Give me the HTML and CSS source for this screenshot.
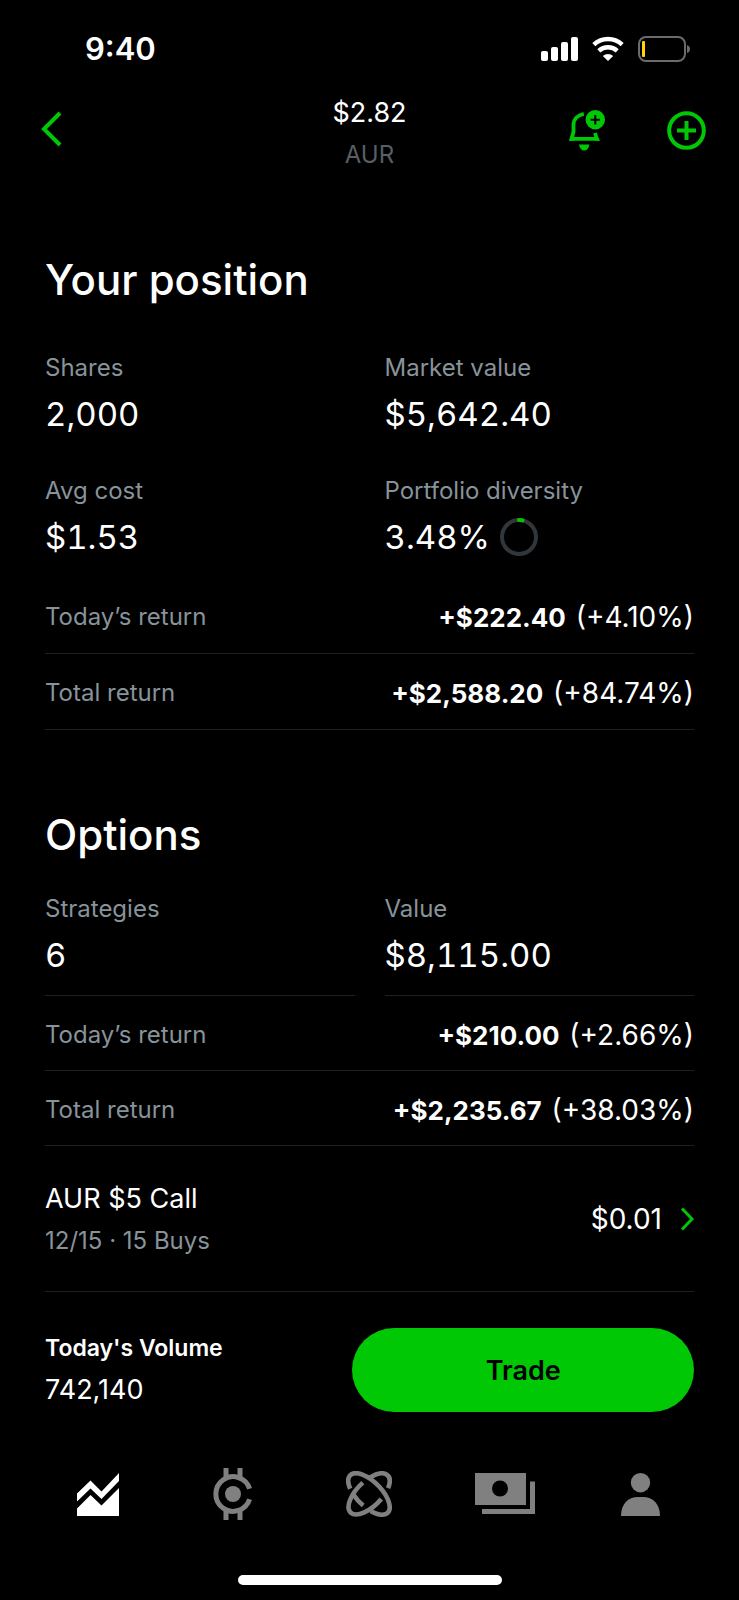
FILE: index.html
```html
<!DOCTYPE html>
<html lang="en">
<head>
    <meta charset="UTF-8">
    <meta name="viewport" content="width=device-width, initial-scale=1.0">
    <title>AUR</title>
    <link rel="stylesheet" href="styles.css">
</head>
<body>
    <div class="status-bar">
        <span class="time">9:40</span>
        <div class="status-icons">
            <svg width="37" height="26" viewBox="0 0 37 26" fill="#fff">
                <rect x="0" y="15" width="7" height="10" rx="2"/>
                <rect x="10" y="11" width="7" height="14" rx="2"/>
                <rect x="20" y="6" width="7" height="19" rx="2"/>
                <rect x="30" y="1" width="7" height="24" rx="2"/>
            </svg>
            <svg width="32" height="26" viewBox="0 0 32 26" fill="none" stroke="#fff" stroke-width="4.4">
                <path d="M1.8 8.6a21 21 0 0 1 28.4 0"/>
                <path d="M6.8 14.8a13.5 13.5 0 0 1 18.4 0"/>
                <path d="M16 25l-5.2-5a7.8 7.8 0 0 1 10.4 0z" fill="#fff" stroke="none"/>
            </svg>
            <svg width="52" height="26" viewBox="0 0 52 26">
                <rect x="1" y="1" width="46" height="24" rx="7" fill="none" stroke="#6b6b6b" stroke-width="2"/>
                <rect x="4" y="5" width="3" height="16" rx="1" fill="#ffd60a"/>
                <path d="M49 9q3 1 3 4t-3 4z" fill="#6b6b6b"/>
            </svg>
        </div>
    </div>

    <header class="navbar">
        <a href="#" class="back" aria-label="Back">
            <svg width="22" height="36" viewBox="0 0 22 36" fill="none" stroke="#00c805" stroke-width="4"><path d="M19 2L3 18l16 16"/></svg>
        </a>
        <div class="quote">
            <div class="price">$2.82</div>
            <div class="symbol">AUR</div>
        </div>
        <div class="navbar-right">
            <button type="button" aria-label="Add alert">
                <svg width="37" height="41" viewBox="0 0 37 41" fill="#00c805">
                    <path d="M14.8 3.8C8.5 5 4.5 9.5 4.5 15v6.5L2.8 28.8h25L26 23" fill="none" stroke="#00c805" stroke-width="3.8"/>
                    <path d="M2.3 24L0 30.8h5zM28.5 26l2.5 4.8h-5z"/>
                    <path d="M10 34.5h10.4q-1 6-5.2 6t-5.2-6z"/>
                    <circle cx="26.3" cy="9.7" r="9.7"/>
                    <path d="M26.3 5v9.4M21.6 9.7H31" stroke="#000" stroke-width="2"/>
                </svg>
            </button>
            <button type="button" aria-label="Add to list">
                <svg width="39" height="39" viewBox="0 0 39 39" fill="none" stroke="#00c805" stroke-width="4">
                    <circle cx="19.5" cy="19.5" r="17.3"/>
                    <path d="M19.5 10v19M10 19.5h19"/>
                </svg>
            </button>
        </div>
    </header>

    <main>
        <section class="position">
            <h2>Your position</h2>
            <div class="stats">
                <div class="stat">
                    <div class="label">Shares</div>
                    <div class="value">2,000</div>
                </div>
                <div class="stat">
                    <div class="label">Market value</div>
                    <div class="value">$5,642.40</div>
                </div>
                <div class="stat">
                    <div class="label">Avg cost</div>
                    <div class="value">$1.53</div>
                </div>
                <div class="stat">
                    <div class="label">Portfolio diversity</div>
                    <div class="value">3.48%
                        <svg width="38" height="38" viewBox="0 0 38 38" fill="none" stroke-width="4">
                            <circle cx="19" cy="19" r="17" stroke="#30363a"/>
                            <path d="M19 2a17 17 0 0 1 3.5 .4" stroke="#00c805" stroke-linecap="round"/>
                        </svg>
                    </div>
                </div>
            </div>
            <div class="row">
                <span class="label">Today’s return</span>
                <span class="amount"><b>+$222.40</b> (+4.10%)</span>
            </div>
            <div class="row">
                <span class="label">Total return</span>
                <span class="amount"><b>+$2,588.20</b> (+84.74%)</span>
            </div>
        </section>

        <section class="options">
            <h2>Options</h2>
            <div class="stats">
                <div class="stat">
                    <div class="label">Strategies</div>
                    <div class="value">6</div>
                </div>
                <div class="stat">
                    <div class="label">Value</div>
                    <div class="value">$8,115.00</div>
                </div>
            </div>
            <div class="row">
                <span class="label">Today’s return</span>
                <span class="amount"><b>+$210.00</b> (+2.66%)</span>
            </div>
            <div class="row">
                <span class="label">Total return</span>
                <span class="amount"><b>+$2,235.67</b> (+38.03%)</span>
            </div>
            <a href="#" class="contract">
                <div>
                    <div class="contract-name">AUR $5 Call</div>
                    <div class="label">12/15 · 15 Buys</div>
                </div>
                <div class="contract-price">
                    $0.01
                    <svg width="14" height="24" viewBox="0 0 14 24" fill="none" stroke="#00c805" stroke-width="3"><path d="M2 1.5L12 12 2 22.5"/></svg>
                </div>
            </a>
        </section>
    </main>

    <div class="trade-bar">
        <div class="volume">
            <div class="volume-title">Today's Volume</div>
            <div class="volume-number">742,140</div>
        </div>
        <button type="button" class="trade-button">Trade</button>
    </div>

    <nav class="tabs">
        <a href="#" aria-label="Investing">
            <svg width="42" height="43" viewBox="0 0 42 43" fill="#fff">
                <path d="M0 20.5L13.5 7.5 24.5 18.500 42 0v8L24.5 26 13.5 15.5 0 28.5z"/>
                <path d="M0 43V35.5L13.5 22 24.5 32.500 42 15v28z"/>
            </svg>
        </a>
        <a href="#" aria-label="Crypto">
            <svg width="40" height="52" viewBox="0 0 40 52" fill="none" stroke="#808080" stroke-width="5">
                <path d="M36.6 20.7A17.3 17.3 0 1 0 36.6 31.3"/>
                <path d="M13 0v10M27 0v10M13 42v10M27 42v10"/>
                <circle cx="20" cy="26" r="8" fill="#808080" stroke="none"/>
            </svg>
        </a>
        <a href="#" aria-label="Discover">
            <svg width="46" height="46" viewBox="0 0 46 46" fill="none" stroke="#808080" stroke-width="4.6">
                <g transform="rotate(45 23 23)">
                    <path d="M6 32.6A26.5 12.5 0 1 1 36.2 33.8"/>
                    <path d="M27.1 35.3A26.5 12.5 0 0 1 12.2 34.4"/>
                </g>
                <g transform="rotate(-45 23 23)">
                    <path d="M35.4 12A26.5 12.5 0 0 1 40.7 32.3"/>
                    <path d="M28.1 35.3A26.5 12.5 0 1 1 26.7 10.6"/>
                </g>
            </svg>
        </a>
        <a href="#" aria-label="Cash">
            <svg width="60" height="42" viewBox="0 0 60 42" fill="#808080">
                <path d="M0 0h51v32H0z"/>
                <circle cx="25" cy="15.5" r="8" fill="#000"/>
                <path d="M55 8.5h5V41H7v-5h48z"/>
            </svg>
        </a>
        <a href="#" aria-label="Account">
            <svg width="39" height="43" viewBox="0 0 39 43" fill="#808080">
                <circle cx="19.5" cy="9.7" r="9.7"/>
                <path d="M0 43C0 31 7 24 17 24h5c10 0 17 7 17 19z"/>
            </svg>
        </a>
    </nav>
    <div class="home-indicator"></div>
</body>
</html>
```

FILE: styles.css
```css
body {
    font-family: Inter, 'Liberation Sans', sans-serif;
    margin: 0;
    padding: 0;
    background-color: #000;
    color: #fff;
}
svg {
    display: block;
    flex-shrink: 0;
}
a {
    color: inherit;
    text-decoration: none;
}
button {
    font-family: inherit;
    border: none;
    padding: 0;
    background: none;
    cursor: pointer;
}
.status-bar {
    display: flex;
    justify-content: space-between;
    align-items: center;
    padding: 28px 49px 0 85px;
}
.time {
    font-size: 31px;
    line-height: 42px;
    font-weight: 600;
}
.status-icons {
    display: flex;
    gap: 14px;
}
.navbar {
    display: grid;
    grid-template-columns: 1fr auto 1fr;
    align-items: center;
    padding: 25px 33px 0;
}
.back {
    justify-self: start;
    padding: 0 8px 8px;
}
.quote {
    text-align: center;
}
.price {
    font-size: 27px;
    line-height: 36px;
}
.symbol {
    font-size: 24px;
    line-height: 32px;
    margin-top: 8px;
    color: #565f63;
}
.navbar-right {
    display: flex;
    justify-content: flex-end;
    align-items: center;
    gap: 61px;
    padding-bottom: 6px;
}
main {
    padding: 0 45px;
}
h2 {
    font-size: 42px;
    line-height: 56px;
    font-weight: 500;
    margin: 0;
}
.position {
    padding-top: 81px;
}
.options {
    padding-top: 77px;
}
.stats {
    display: grid;
    grid-template-columns: 1fr 1fr;
    gap: 41px 30px;
}
.position .stats {
    margin: 44px 0 21px;
}
.options .stats {
    margin-top: 30px;
}
.options .stat {
    padding-bottom: 20px;
    border-bottom: 1px solid #1e2124;
}
.label {
    font-size: 24px;
    line-height: 32px;
    color: #87939a;
}
.value {
    display: flex;
    align-items: center;
    gap: 10px;
    margin-top: 10px;
    font-size: 33px;
    line-height: 40px;
    font-variant-numeric: tabular-nums;
}
.row {
    display: flex;
    justify-content: space-between;
    align-items: center;
    padding: 21px 0 18px;
    border-bottom: 1px solid #1e2124;
}
.options .row {
    padding-bottom: 17px;
}
.amount {
    font-size: 28px;
    line-height: 36px;
}
.amount b {
    font-size: 26px;
    line-height: 26px;
    font-weight: 700;
    margin-right: 2px;
}
.contract {
    display: flex;
    justify-content: space-between;
    align-items: center;
    padding: 35px 0 34px;
    border-bottom: 1px solid #1e2124;
}
.contract-name {
    font-size: 27px;
    line-height: 36px;
    margin-bottom: 8px;
}
.contract-price {
    display: flex;
    align-items: center;
    gap: 18px;
    font-size: 28px;
    line-height: 36px;
}
.trade-bar {
    display: grid;
    grid-template-columns: 9fr 10fr;
    align-items: center;
    padding: 36px 45px 0;
}
.volume-title {
    font-size: 23px;
    line-height: 32px;
    font-weight: 600;
    margin-bottom: 8px;
}
.volume-number {
    font-size: 27px;
    line-height: 36px;
}
.trade-button {
    height: 84px;
    border-radius: 42px;
    background-color: #00c805;
    color: #000;
    font-size: 27px;
    font-weight: 600;
}
.tabs {
    display: grid;
    grid-template-columns: repeat(5, 1fr);
    align-items: center;
    justify-items: center;
    padding: 56px 31px 0 30px;
}
.home-indicator {
    width: 264px;
    height: 10px;
    margin: 55px auto 0;
    border-radius: 5px;
    background-color: #fff;
}
```
